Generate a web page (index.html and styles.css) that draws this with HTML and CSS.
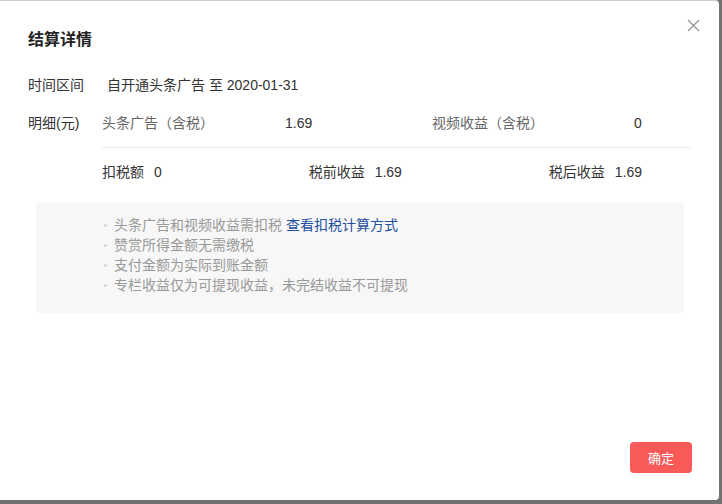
FILE: index.html
```html
<!DOCTYPE html>
<html lang="zh-CN">
<head>
<meta charset="utf-8">
<title>结算详情</title>
<link rel="stylesheet" href="styles.css">
</head>
<body>
<div class="dialog">
  <button class="close" aria-label="关闭">
    <svg width="13" height="13" viewBox="0 0 13 13"><path d="M1 1L12 12M12 1L1 12" stroke="#999" stroke-width="1.4" fill="none"/></svg>
  </button>
  <h2 class="title">结算详情</h2>
  <div class="row">
    <div class="label">时间区间</div>
    <div class="value period">自开通头条广告 至 2020-01-31</div>
  </div>
  <div class="row detail">
    <div class="label">明细(元)</div>
    <div class="detail-body">
      <div class="income">
        <span class="in-label first">头条广告（含税）</span>
        <span class="in-value first">1.69</span>
        <span class="in-label second">视频收益（含税）</span>
        <span class="in-value">0</span>
      </div>
      <div class="summary">
        <span>扣税额<b>0</b></span>
        <span>税前收益<b>1.69</b></span>
        <span>税后收益<b>1.69</b></span>
      </div>
    </div>
  </div>
  <ul class="notes">
    <li>头条广告和视频收益需扣税 <a href="#">查看扣税计算方式</a></li>
    <li>赞赏所得金额无需缴税</li>
    <li>支付金额为实际到账金额</li>
    <li>专栏收益仅为可提现收益，未完结收益不可提现</li>
  </ul>
  <div class="footer">
    <button class="ok">确定</button>
  </div>
</div>
</body>
</html>
```
FILE: styles.css
```css
html, body {
  margin: 0;
  padding: 0;
  background: #727272;
}
body {
  font-family: "Liberation Sans", "Noto Sans CJK SC", sans-serif;
  color: #333;
  font-size: 14px;
  width: 722px;
  height: 504px;
  overflow: hidden;
}
.dialog {
  position: relative;
  box-sizing: border-box;
  width: 719px;
  height: 500px;
  background: #fff;
  border-top: 1px solid #cfcfcf;
  border-radius: 0 4px 4px 0;
  padding: 27px 27px 27px 28px;
  display: flex;
  flex-direction: column;
}
.close {
  position: absolute;
  top: 18px;
  right: 19px;
  width: 13px;
  height: 13px;
  padding: 0;
  border: 0;
  background: none;
  display: flex;
}
.title {
  margin: 0;
  font-size: 16px;
  line-height: 24px;
  font-weight: bold;
  color: #222;
}
.row {
  display: flex;
  line-height: 20px;
  margin-top: 23px;
}
.row.detail {
  margin-top: 18px;
}
.label {
  width: 74px;
  flex: none;
  color: #333;
}
.period {
  padding-left: 5px;
  color: #333;
}
.detail-body {
  flex: 1;
}
.income {
  display: flex;
  padding-bottom: 14px;
  border-bottom: 1px solid #eeeeee;
}
.in-label {
  color: #666;
}
.in-label.first {
  width: 183px;
}
.in-value.first {
  width: 147px;
}
.in-label.second {
  width: 202px;
}
.summary {
  display: flex;
  justify-content: space-between;
  width: 540px;
  padding-top: 14px;
}
.summary b {
  font-weight: normal;
  margin-left: 10px;
}
.notes {
  list-style: none;
  margin: 21px 8px 0;
  padding: 12px 0 18px 68px;
  background: #f7f7f7;
  color: #999;
  line-height: 20px;
}
.notes li {
  position: relative;
  padding-left: 10px;
}
.notes li::before {
  content: "";
  position: absolute;
  left: 0;
  top: 9px;
  width: 3px;
  height: 3px;
  border-radius: 50%;
  background: #d6d6d6;
}
.notes a {
  color: #1f4f9c;
  text-decoration: none;
}
.footer {
  margin-top: auto;
  display: flex;
  justify-content: flex-end;
}
.ok {
  width: 62px;
  height: 31px;
  border: 0;
  border-radius: 4px;
  background: #f85959;
  color: #fff;
  font-family: "Liberation Sans", "Noto Sans CJK SC", sans-serif;
  font-size: 13px;
  padding: 0;
}
```
